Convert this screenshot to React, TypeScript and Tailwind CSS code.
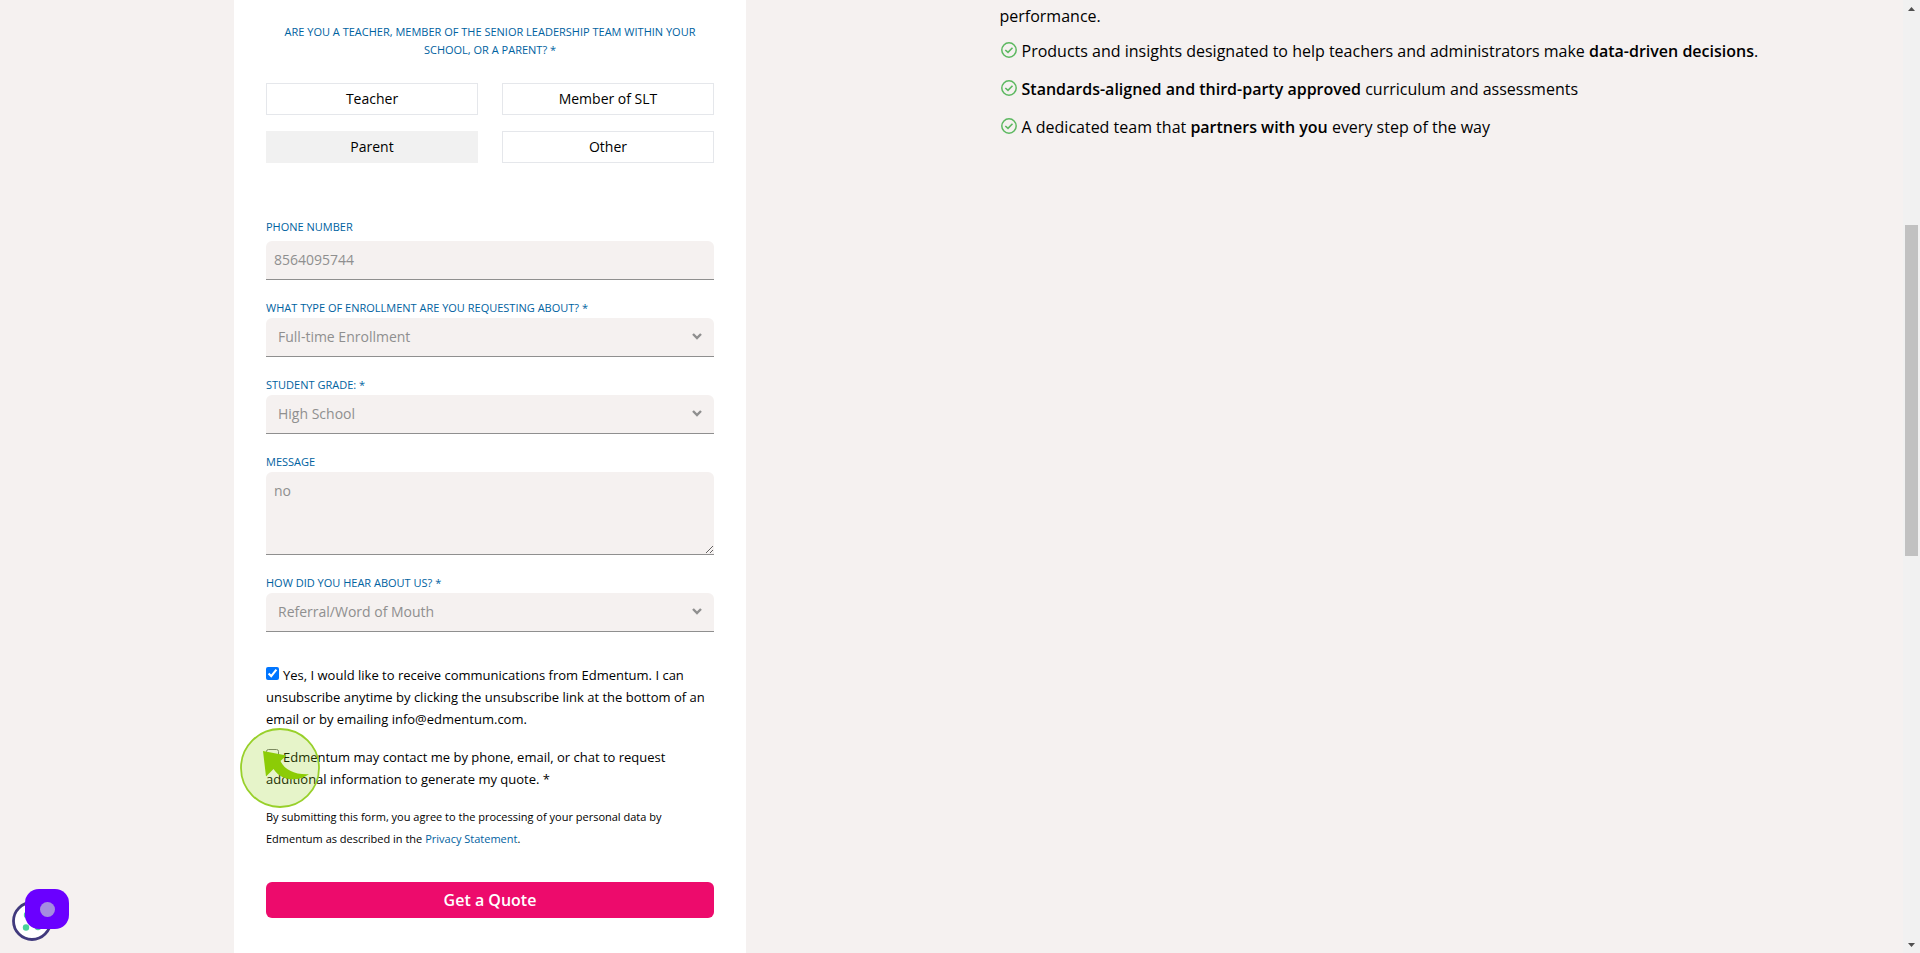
import React from "react";

const label = "block text-[11px] leading-5 uppercase text-[#00629f]";
const field =
  "block w-full rounded-t-md border-b border-[#8f8f8f] bg-[#f5f1f0] text-sm text-[#8f8f8f] outline-none";

function SelectField({ id, text, value }: { id: string; text: string; value: string }) {
  return (
    <div>
      <label htmlFor={id} className={label}>
        {text}
      </label>
      <div className="relative">
        <select id={id} className={`${field} h-[39px] appearance-none px-3`} defaultValue={value}>
          <option>{value}</option>
        </select>
        <svg
          className="pointer-events-none absolute right-3 top-[15px] h-2 w-2.5"
          viewBox="0 0 10 8"
          fill="none"
          stroke="#8f8f8f"
          strokeWidth="2.4"
          aria-hidden="true"
        >
          <path d="M1 1 5 5 9 1" />
        </svg>
      </div>
    </div>
  );
}

function Choice({ children, active = false }: { children: React.ReactNode; active?: boolean }) {
  return (
    <button
      type="button"
      aria-pressed={active}
      className={
        active
          ? "h-8 border border-[#f1f1f1] bg-[#f1f1f1] text-sm"
          : "h-8 border border-gray-200 bg-white text-sm"
      }
    >
      {children}
    </button>
  );
}

function Check() {
  return (
    <svg className="mt-[3px] h-4 w-4 shrink-0" viewBox="0 0 16 16" fill="none" stroke="#5cb860" aria-hidden="true">
      <circle cx="8" cy="8" r="7.2" strokeWidth="1.5" />
      <path d="M4.3 8 7 10.4 11.5 5.8" strokeWidth="1.6" />
    </svg>
  );
}

function Benefit({ children }: { children: React.ReactNode }) {
  return (
    <li className="flex gap-[5px] pl-px">
      <Check />
      <span>{children}</span>
    </li>
  );
}

export default function App() {
  return (
    <div className="flex min-h-screen bg-[#f5f1f0] font-['Open_Sans',sans-serif] text-black">
      <main className="grid flex-1 grid-cols-2">
        <form className="ml-[234px] w-[512px] bg-white px-8 pb-8 pt-[23px]">
          <fieldset>
            <legend className="w-full px-3 text-center text-[11px] leading-[18px] uppercase text-[#00629f]">
              Are you a teacher, member of the senior leadership team within your school, or a parent? *
            </legend>
            <div className="mt-6 grid grid-cols-2 gap-x-6 gap-y-4">
              <Choice>Teacher</Choice>
              <Choice>Member of SLT</Choice>
              <Choice active>Parent</Choice>
              <Choice>Other</Choice>
            </div>
          </fieldset>

          <div className="mt-[54px] flex flex-col gap-[18px]">
            <div>
              <label htmlFor="phone" className={`${label} mb-1`}>
                Phone Number
              </label>
              <input id="phone" type="tel" defaultValue="8564095744" className={`${field} h-[39px] px-2 pb-0.5`} />
            </div>
            <SelectField id="enrollment" text="What type of enrollment are you requesting about? *" value="Full-time Enrollment" />
            <SelectField id="grade" text="Student Grade: *" value="High School" />
            <div>
              <label htmlFor="message" className={label}>
                Message
              </label>
              <textarea id="message" defaultValue="no" className={`${field} h-[83px] px-2 py-[9px]`} />
            </div>
            <SelectField id="source" text="How did you hear about us? *" value="Referral/Word of Mouth" />
          </div>

          <div className="mt-8 flex flex-col gap-4 text-[13px] leading-[22px]">
            <div>
              <input id="updates" type="checkbox" defaultChecked className="mr-1 h-[13px] w-[13px]" />
              <label htmlFor="updates">
                Yes, I would like to receive communications from Edmentum. I can unsubscribe anytime by clicking the
                unsubscribe link at the bottom of an email or by emailing info@edmentum.com.
              </label>
            </div>
            <div className="relative">
              <input id="contact" type="checkbox" className="mr-1 h-[13px] w-[13px]" />
              <label htmlFor="contact">
                Edmentum may contact me by phone, email, or chat to request additional information to generate my
                quote. *
              </label>
              <svg
                className="pointer-events-none absolute -left-[26px] -top-[18px] h-20 w-20"
                viewBox="0 0 80 80"
                aria-hidden="true"
              >
                <circle cx="40" cy="40" r="39" fill="#8ecb0a" fillOpacity=".22" stroke="#98d02a" strokeWidth="1.8" />
                <path
                  d="M23 23 46.500 27.500 40.500 33 C44 41 54 47 69 46.300 C59 53.500 42 54 33.500 41 L26 48.500 Z"
                  fill="#8ccc06"
                />
              </svg>
            </div>
            <p className="text-[11px] leading-[22px]">
              By submitting this form, you agree to the processing of your personal data by Edmentum as described in the{" "}
              <a href="#privacy" className="text-[#00629f]">
                Privacy Statement
              </a>
              .
            </p>
          </div>

          <button type="submit" className="mt-8 h-9 w-full rounded-md bg-[#ed0b6c] font-semibold text-white">
            Get a Quote
          </button>
        </form>

        <section className="pl-12 pt-1">
          <p className="leading-6">performance.</p>
          <ul className="mt-[11px] flex flex-col gap-3.5 leading-6">
            <Benefit>
              Products and insights designated to help teachers and administrators make{" "}
              <strong className="font-semibold">data-driven decisions</strong>.
            </Benefit>
            <Benefit>
              <strong className="font-semibold">Standards-aligned and third-party approved</strong> curriculum and
              assessments
            </Benefit>
            <Benefit>
              A dedicated team that <strong className="font-semibold">partners with you</strong> every step of the way
            </Benefit>
          </ul>
        </section>
      </main>

      <div className="sticky top-0 flex h-screen w-[17px] flex-col items-center justify-between bg-[#f1f1f1]" aria-hidden="true">
        <svg className="h-[17px] w-[17px]" viewBox="0 0 17 17" fill="#505050">
          <path d="M5 11 8.5 7 12 11Z" />
        </svg>
        <div className="absolute top-[225px] h-[331px] w-[13px] bg-[#c1c1c1]" />
        <svg className="h-[17px] w-[17px]" viewBox="0 0 17 17" fill="#505050">
          <path d="M5 7 8.5 11 12 7Z" />
        </svg>
      </div>

      <button type="button" aria-label="Cookie settings and chat" className="fixed bottom-3 left-3 h-[52px] w-[58px]">
        <svg className="h-full w-full" viewBox="0 0 58 52" aria-hidden="true">
          <circle cx="20" cy="32" r="18.5" fill="#fff" stroke="#413a7d" strokeWidth="2.8" />
          <g fill="#4bd29a">
            <circle cx="14" cy="38.5" r="3.2" />
            <circle cx="15" cy="26" r="3.2" />
            <circle cx="26" cy="38" r="3.2" />
          </g>
          <rect x="13" width="44" height="40" rx="14" fill="#6a00ff" />
          <circle cx="35.5" cy="20.5" r="7.5" fill="#a58ce0" />
        </svg>
      </button>
    </div>
  );
}
